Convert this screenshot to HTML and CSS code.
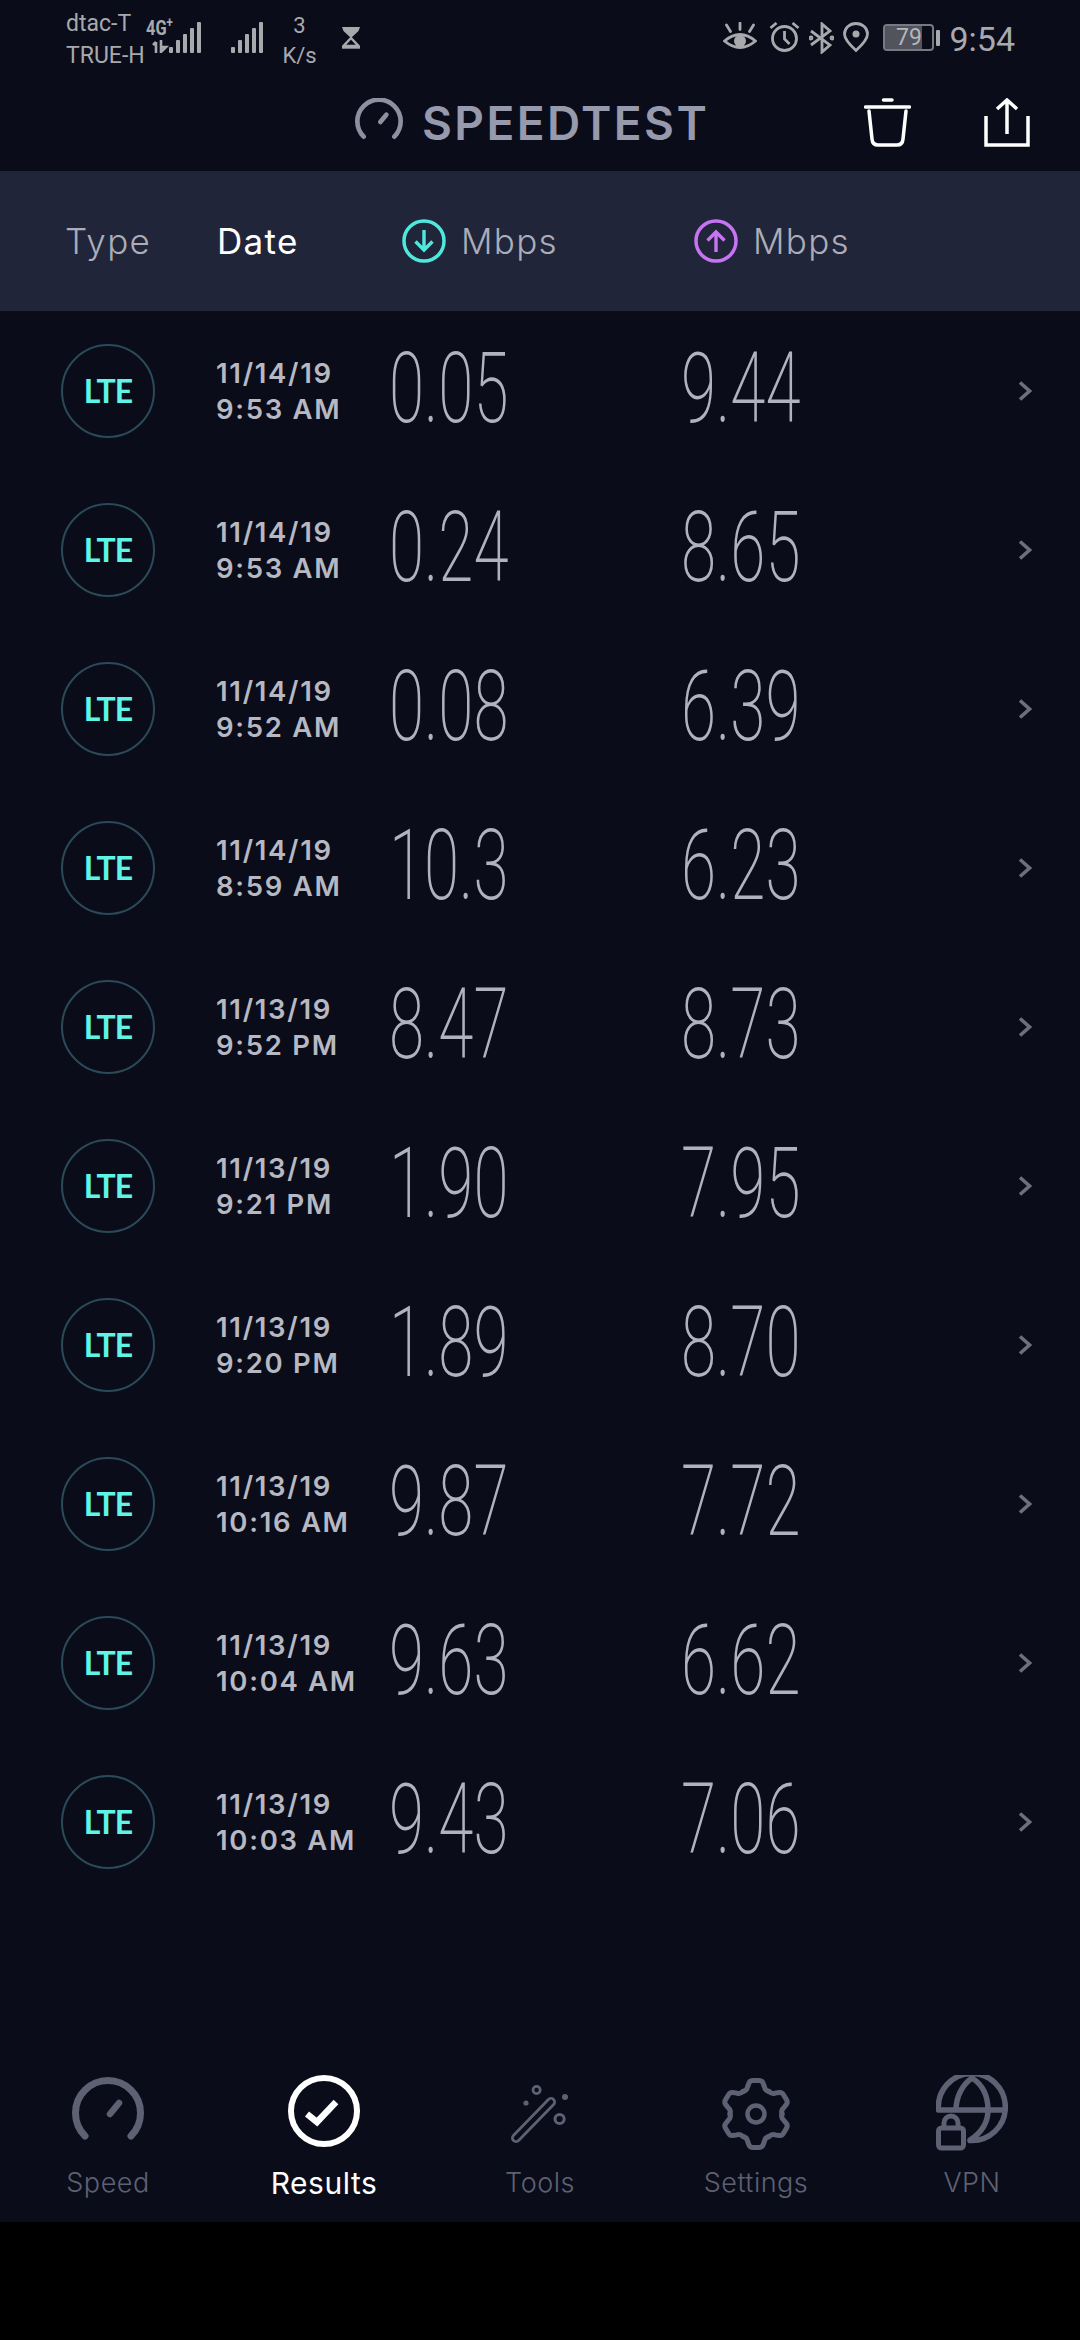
FILE: index.html
```html
<!DOCTYPE html>
<html lang="en">
<head>
    <meta charset="UTF-8">
    <meta name="viewport" content="width=device-width, initial-scale=1.0">
    <title>Speedtest Results</title>
    <link rel="stylesheet" href="styles.css">
</head>
<body>
    <svg class="defs" width="0" height="0">
        <symbol id="chev" viewBox="0 0 14 20"><path d="M2 1.500L11.500 10 2 18.500" fill="none" stroke="currentColor" stroke-width="3.600"/></symbol>
    </svg>

    <div class="app">
        <div class="status-bar">
            <div class="status-left">
                <div class="carriers"><span>dtac-T</span><span>TRUE-H</span></div>
                <div class="net-type">
                    <span class="net-label">4G<sup>+</sup></span>
                    <svg class="net-arrows" width="20" height="13" viewBox="0 0 20 13"><path d="M4 13V2M1 5l3-3M9 0v12l5-5H9" fill="none" stroke="#a8a9ad" stroke-width="2.6"/></svg>
                </div>
                <svg class="bars" width="33" height="31" viewBox="0 0 33 31"><rect x="0" y="25" width="4" height="6" rx="1"/><rect x="7" y="18" width="4" height="13" rx="1"/><rect x="14" y="12" width="4" height="19" rx="1"/><rect x="21" y="6" width="4" height="25" rx="1"/><rect x="28" y="0" width="4" height="31" rx="1"/></svg>
                <svg class="bars bars-2" width="33" height="31" viewBox="0 0 33 31"><rect x="0" y="25" width="4" height="6" rx="1"/><rect x="7" y="18" width="4" height="13" rx="1"/><rect x="14" y="12" width="4" height="19" rx="1"/><rect x="21" y="6" width="4" height="25" rx="1"/><rect x="28" y="0" width="4" height="31" rx="1"/></svg>
                <div class="net-speed"><span>3</span><span>K/s</span></div>
                <svg class="hourglass" width="18" height="22" viewBox="0 0 18 22"><path d="M0 0H18L16.5 4 9 11 1.500 4Z" fill="#a8a9ad"/><path d="M9 11L16.500 19H1.500Z" fill="none" stroke="#a8a9ad" stroke-width="2.400"/><path d="M0 20.500H18" stroke="#a8a9ad" stroke-width="2.400"/></svg>
            </div>
            <div class="status-right">
                <svg width="34" height="30" viewBox="0 0 34 30" fill="none" stroke="#a8a9ad" stroke-width="2.800"><path d="M1.500 19Q17 6 32.500 19Q17 32 1.500 19Z"/><circle cx="17" cy="19" r="6" fill="#a8a9ad" stroke="none"/><path d="M3.500 3l4 6.500M17 1v6.500M30.500 3l-4 6.500" stroke-linecap="round"/></svg>
                <svg class="ic-alarm" width="31" height="30" viewBox="0 0 31 30" fill="none" stroke="#a8a9ad" stroke-width="2.800"><circle cx="15.500" cy="16.500" r="12"/><path d="M15.500 9v8l5 5M1.500 6l6-5M29.500 6l-6-5"/></svg>
                <svg class="ic-bt" width="25" height="32" viewBox="0 0 25 32" fill="none" stroke="#a8a9ad" stroke-width="2.800"><path d="M2 9l19 14-8 7V2l8 7-19 14"/><circle cx="2" cy="16" r="1"/><circle cx="23" cy="16" r="1"/></svg>
                <svg class="ic-pin" width="26" height="30" viewBox="0 0 26 30" fill="none" stroke="#a8a9ad" stroke-width="2.800"><path d="M13 28.500Q1.500 18 1.500 12a11.500 10.500 0 0 1 23 0Q24.500 18 13 28.500Z"/><circle cx="13" cy="12" r="3.500" fill="#a8a9ad" stroke="none"/></svg>
                <div class="battery"><span class="battery-level">79</span></div>
                <span class="battery-nub"></span>
                <span class="clock">9:54</span>
            </div>
        </div>

        <div class="title-bar">
            <div class="logo">
                <svg width="48" height="42" viewBox="0 0 72 63" fill="none" stroke="#8e90a2" stroke-linecap="round"><path d="M13 58A32.500 32.500 0 1 1 59 58" stroke-width="7"/><path d="M38 36l9-11" stroke-width="7"/></svg>
                <span class="logo-text">SPEEDTEST</span>
            </div>
            <div class="title-actions">
                <svg width="47" height="49" viewBox="0 0 47 49" fill="none" stroke="#fff" stroke-width="3.500" stroke-linecap="round"><path d="M1.500 9H45.500M19.500 2H28"/><path d="M5 13L8 41Q8.500 47 14 47H33Q38.500 47 39 41L42 13"/></svg>
                <svg width="46" height="49" viewBox="0 0 46 49" fill="none" stroke="#fff" stroke-width="3.500"><path d="M2 18V47H44V18"/><path d="M23 2V36M13 11L23 2 33 11"/></svg>
            </div>
        </div>

        <div class="table-head">
            <span class="th-type">Type</span>
            <span class="th-date">Date</span>
            <span class="th-speed">
                <svg width="44" height="44" viewBox="0 0 44 44" fill="none" stroke="#4fe8dc" stroke-width="3.500"><circle cx="22" cy="22" r="20"/><path d="M22 11V31M13.500 22.500L22 31 30.500 22.500" stroke-width="3.400"/></svg>
                Mbps
            </span>
            <span class="th-speed">
                <svg width="44" height="44" viewBox="0 0 44 44" fill="none" stroke="#c874f2" stroke-width="3.500"><circle cx="22" cy="22" r="20"/><path d="M22 33V13M13.500 21.500L22 13 30.500 21.500" stroke-width="3.400"/></svg>
                Mbps
            </span>
        </div>

        <div class="results">
            <div class="row"><div class="lte">LTE</div><div class="when">11/14/19<br>9:53 AM</div><div class="val"><span>0.05</span></div><div class="val"><span>9.44</span></div><svg class="chev"><use href="#chev"/></svg></div>
            <div class="row"><div class="lte">LTE</div><div class="when">11/14/19<br>9:53 AM</div><div class="val"><span>0.24</span></div><div class="val"><span>8.65</span></div><svg class="chev"><use href="#chev"/></svg></div>
            <div class="row"><div class="lte">LTE</div><div class="when">11/14/19<br>9:52 AM</div><div class="val"><span>0.08</span></div><div class="val"><span>6.39</span></div><svg class="chev"><use href="#chev"/></svg></div>
            <div class="row"><div class="lte">LTE</div><div class="when">11/14/19<br>8:59 AM</div><div class="val"><span>10.3</span></div><div class="val"><span>6.23</span></div><svg class="chev"><use href="#chev"/></svg></div>
            <div class="row"><div class="lte">LTE</div><div class="when">11/13/19<br>9:52 PM</div><div class="val"><span>8.47</span></div><div class="val"><span>8.73</span></div><svg class="chev"><use href="#chev"/></svg></div>
            <div class="row"><div class="lte">LTE</div><div class="when">11/13/19<br>9:21 PM</div><div class="val"><span>1.90</span></div><div class="val"><span>7.95</span></div><svg class="chev"><use href="#chev"/></svg></div>
            <div class="row"><div class="lte">LTE</div><div class="when">11/13/19<br>9:20 PM</div><div class="val"><span>1.89</span></div><div class="val"><span>8.70</span></div><svg class="chev"><use href="#chev"/></svg></div>
            <div class="row"><div class="lte">LTE</div><div class="when">11/13/19<br>10:16 AM</div><div class="val"><span>9.87</span></div><div class="val"><span>7.72</span></div><svg class="chev"><use href="#chev"/></svg></div>
            <div class="row"><div class="lte">LTE</div><div class="when">11/13/19<br>10:04 AM</div><div class="val"><span>9.63</span></div><div class="val"><span>6.62</span></div><svg class="chev"><use href="#chev"/></svg></div>
            <div class="row"><div class="lte">LTE</div><div class="when">11/13/19<br>10:03 AM</div><div class="val"><span>9.43</span></div><div class="val"><span>7.06</span></div><svg class="chev"><use href="#chev"/></svg></div>
        </div>

        <div class="tab-bar">
            <div class="tab">
                <svg width="72" height="76" viewBox="0 0 72 76" fill="none" stroke="#5e6173" stroke-linecap="round"><g transform="translate(0 3)"><path d="M13 58A32.500 32.500 0 1 1 59 58" stroke-width="7"/><path d="M38 36l9-11" stroke-width="6.500"/></g></svg>
                <span>Speed</span>
            </div>
            <div class="tab active">
                <svg width="72" height="76" viewBox="0 0 72 76" fill="none" stroke="#fff"><circle cx="36" cy="36" r="33" stroke-width="6"/><path d="M19 39L29 47 48 27" stroke-width="6.500"/></svg>
                <span>Results</span>
            </div>
            <div class="tab">
                <svg width="72" height="76" viewBox="0 0 72 76" fill="none" stroke="#5e6173" stroke-linecap="round"><path d="M12 63L47 27" stroke-width="10"/><path d="M12 63L47 27" stroke="#0a0c1a" stroke-width="4.500"/><circle cx="32.600" cy="15" r="3.600" stroke-width="2.800"/><circle cx="55.600" cy="44" r="4.600" stroke-width="3"/><circle cx="61" cy="22" r="3" fill="#5e6173" stroke="none"/><circle cx="22" cy="28" r="2.600" fill="#5e6173" stroke="none"/></svg>
                <span>Tools</span>
            </div>
            <div class="tab">
                <svg class="gear" width="72" height="76" viewBox="0 0 72 76" fill="none" stroke="#5e6173"><g transform="translate(36 39)" stroke-width="5" stroke-linecap="round" stroke-linejoin="round"><path id="seg" d="M-13-22.500Q-9-23.500-8.500-27L-7-31Q-6-33.500-3-33.500H3Q6-33.500 7-31L8.500-27Q9-23.500 13-22.500"/><use href="#seg" transform="rotate(60)"/><use href="#seg" transform="rotate(120)"/><use href="#seg" transform="rotate(180)"/><use href="#seg" transform="rotate(240)"/><use href="#seg" transform="rotate(300)"/><circle r="8.500" stroke-width="4.500"/></g></svg>
                <span>Settings</span>
            </div>
            <div class="tab">
                <svg width="72" height="76" viewBox="0 0 72 76" fill="none" stroke="#5e6173" stroke-width="5.500" stroke-linecap="round"><path d="M2.500 35A33.500 33.500 0 1 1 34 65.500M2.500 35H69M36 3C26 10 20 22 20 35M36 3C47 10 52 22 52 35C52 48 45 58 34 65"/><rect x="2.500" y="53" width="25" height="20" rx="3" stroke-width="5"/><path d="M8 52V48a7 7 0 0 1 14 0V52" stroke-width="5"/></svg>
                <span>VPN</span>
            </div>
        </div>
        <div class="nav-gap"></div>
    </div>
</body>
</html>
```

FILE: styles.css
```css
* {
    box-sizing: border-box;
}

body {
    margin: 0;
    background-color: #000;
    font-family: Inter, sans-serif;
}

.defs {
    display: none;
}

.app {
    width: 1080px;
    height: 2340px;
    display: flex;
    flex-direction: column;
    background-color: #0a0c1a;
}

/* status bar */
.status-bar {
    height: 76px;
    display: flex;
    justify-content: space-between;
    padding: 8px 65px 0 66px;
    color: #a8a9ad;
    font-family: Roboto, sans-serif;
}

.status-left,
.status-right {
    display: flex;
    align-items: flex-start;
}

.carriers {
    display: flex;
    flex-direction: column;
    font-size: 23px;
    line-height: 32px;
    width: 80px;
}

.net-type {
    width: 23px;
    margin-top: 10px;
}

.net-label {
    display: block;
    width: 30px;
    font-size: 20px;
    line-height: 20px;
    font-weight: 700;
    transform: scaleX(0.82);
    transform-origin: left center;
}

.net-label sup {
    font-size: 14px;
    line-height: 0;
}

.net-arrows {
    display: block;
    margin: 2px 0 0 6px;
}

.bars {
    margin-top: 14px;
    fill: #a8a9ad;
}

.bars-2 {
    margin-left: 29px;
}

.net-speed {
    width: 33px;
    margin-left: 19px;
    margin-right: 1px;
    display: flex;
    flex-direction: column;
    align-items: center;
    font-size: 22px;
    line-height: 30px;
    margin-top: 3px;
}

.hourglass {
    margin-left: 25px;
    margin-top: 19px;
}

.status-right {
    padding-top: 14px;
}

.status-right svg {
    margin-right: 12px;
}

.status-right .ic-bt {
    margin-right: 9px;
}

.status-right .ic-alarm {
    margin-right: 9px;
}

.status-right .ic-pin {
    margin-right: 14px;
}

.battery {
    width: 51px;
    height: 27px;
    margin-top: 2px;
    border: 2px solid #777983;
    border-radius: 4px;
    background: linear-gradient(90deg, #52535c 0 78%, transparent 78%);
    background-clip: padding-box;
    display: flex;
    align-items: center;
    justify-content: center;
}

.battery-level {
    font-size: 23px;
    line-height: 23px;
    color: #b5b6ba;
}

.battery-nub {
    width: 4px;
    height: 16px;
    margin: 8px 9px 0 2px;
    border-radius: 1px;
    background-color: #a8a9ad;
}

.clock {
    font-size: 34px;
    line-height: 34px;
}

/* title */
.title-bar {
    height: 95px;
    display: flex;
    justify-content: space-between;
    padding: 22px 50px 0 355px;
}

.logo {
    display: flex;
    align-items: flex-start;
}

.logo-text {
    margin-left: 19px;
    margin-top: 3px;
    font-size: 46px;
    line-height: 44px;
    font-weight: 600;
    letter-spacing: 2.4px;
    color: #9799ac;
}

.title-actions {
    display: flex;
    align-items: flex-start;
    gap: 73px;
}

/* table */
.table-head {
    height: 140px;
    display: flex;
    align-items: center;
    padding-left: 65px;
    background-color: #20253a;
    color: #abadb9;
    font-size: 35px;
    font-weight: 300;
    letter-spacing: 1.3px;
}

.th-type {
    width: 152px;
}

.th-date {
    width: 185px;
    color: #fff;
    font-weight: 400;
}

.th-speed {
    width: 292px;
    display: flex;
    align-items: center;
    gap: 15px;
}

.results {
    flex: 1;
}

.row {
    height: 159px;
    display: grid;
    grid-template-columns: 155px 173px 292px 1fr 14px;
    align-items: center;
    padding: 0 48px 0 61px;
}

.lte {
    width: 94px;
    height: 94px;
    display: flex;
    align-items: center;
    justify-content: center;
    border: 2px solid #2b4a58;
    border-radius: 50%;
    color: #5ff5e6;
    font-size: 32px;
    font-weight: 700;
    letter-spacing: -1px;
    font-family: Lato, sans-serif;
}

.when {
    color: #b6b8c2;
    font-size: 27.5px;
    line-height: 36px;
    font-weight: 600;
    letter-spacing: 1.7px;
    white-space: nowrap;
}

.val {
    padding-bottom: 3px;
    color: #b0b2be;
    font-family: Roboto, sans-serif;
    font-size: 98px;
    line-height: 100px;
    font-weight: 200;
}

.val span {
    display: inline-block;
    transform: scaleX(0.65);
    transform-origin: left center;
}

.chev {
    width: 14px;
    height: 20px;
    color: #6d6e7e;
}

/* bottom tabs */
.tab-bar {
    height: 172px;
    display: grid;
    grid-template-columns: repeat(5, 216px);
    background-color: #0a0c1a;
}

.tab {
    display: flex;
    flex-direction: column;
    align-items: center;
    padding-top: 25px;
    color: #5e6173;
    font-size: 27px;
    line-height: 34px;
    font-weight: 300;
    letter-spacing: 0.5px;
}

.tab span {
    margin-top: 15px;
}

.tab.active {
    color: #fff;
    font-size: 30px;
    font-weight: 400;
}

.nav-gap {
    height: 118px;
    background-color: #000;
}
```
